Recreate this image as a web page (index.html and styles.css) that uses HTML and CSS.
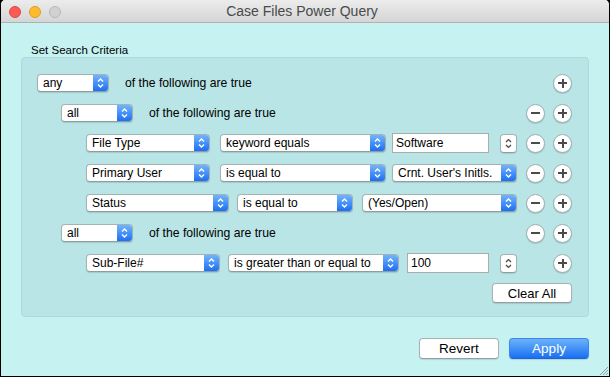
FILE: index.html
```html
<!DOCTYPE html>
<html lang="en">
<head>
    <meta charset="UTF-8">
    <title>Case Files Power Query</title>
    <link rel="stylesheet" href="styles.css">
</head>
<body>
    <div class="window">
        <div class="titlebar">
            <div class="lights">
                <span class="light close"></span>
                <span class="light minimize"></span>
                <span class="light zoom"></span>
            </div>
            <div class="title">Case Files Power Query</div>
        </div>

        <div class="content">
            <div class="section-label">Set Search Criteria</div>

            <div class="criteria">
                <!-- top level group -->
                <div class="row">
                    <div class="popup w-72"><span class="popup-text">any</span><span class="popup-arrow"></span></div>
                    <span class="row-text">of the following are true</span>
                    <div class="actions"><button class="circle plus"></button></div>
                </div>

                <div class="row level-1">
                    <div class="popup w-72"><span class="popup-text">all</span><span class="popup-arrow"></span></div>
                    <span class="row-text">of the following are true</span>
                    <div class="actions"><button class="circle minus"></button><button class="circle plus"></button></div>
                </div>

                <div class="row level-2">
                    <div class="popup w-124 gap-10"><span class="popup-text">File Type</span><span class="popup-arrow"></span></div>
                    <div class="popup w-166 gap-6"><span class="popup-text">keyword equals</span><span class="popup-arrow"></span></div>
                    <div class="field w-97">Software</div>
                    <div class="stepper"></div>
                    <div class="actions"><button class="circle minus"></button><button class="circle plus"></button></div>
                </div>

                <div class="row level-2">
                    <div class="popup w-124 gap-10"><span class="popup-text">Primary User</span><span class="popup-arrow"></span></div>
                    <div class="popup w-166 gap-6"><span class="popup-text">is equal to</span><span class="popup-arrow"></span></div>
                    <div class="popup w-125"><span class="popup-text">Crnt. User's Initls.</span><span class="popup-arrow"></span></div>
                    <div class="actions"><button class="circle minus"></button><button class="circle plus"></button></div>
                </div>

                <div class="row level-2">
                    <div class="popup w-143 gap-8"><span class="popup-text">Status</span><span class="popup-arrow"></span></div>
                    <div class="popup w-116 gap-9"><span class="popup-text">is equal to</span><span class="popup-arrow"></span></div>
                    <div class="popup w-155"><span class="popup-text">(Yes/Open)</span><span class="popup-arrow"></span></div>
                    <div class="actions"><button class="circle minus"></button><button class="circle plus"></button></div>
                </div>

                <div class="row level-1">
                    <div class="popup w-72"><span class="popup-text">all</span><span class="popup-arrow"></span></div>
                    <span class="row-text">of the following are true</span>
                    <div class="actions"><button class="circle minus"></button><button class="circle plus"></button></div>
                </div>

                <div class="row level-2">
                    <div class="popup w-134 gap-8"><span class="popup-text">Sub-File#</span><span class="popup-arrow"></span></div>
                    <div class="popup w-171 gap-8"><span class="popup-text">is greater than or equal to</span><span class="popup-arrow"></span></div>
                    <div class="field w-82">100</div>
                    <div class="stepper"></div>
                    <div class="actions"><button class="circle plus"></button></div>
                </div>

                <div class="clear-row">
                    <button class="push">Clear All</button>
                </div>
            </div>

            <div class="footer">
                <button class="push">Revert</button>
                <button class="push default">Apply</button>
            </div>
        </div>

        <svg class="grip" width="12" height="12" viewBox="0 0 12 12">
            <path d="M11 3 L3 11 M11 6 L6 11 M11 9 L9 11" stroke="#8a9c9c" stroke-width="1" fill="none"/>
        </svg>
    </div>
</body>
</html>
```

FILE: styles.css
```css
* {
    box-sizing: border-box;
}
body {
    margin: 0;
    background-color: #000;
    font-family: "Liberation Sans", Arial, sans-serif;
    font-size: 12px;
    color: #000;
}
.window {
    position: relative;
    width: 610px;
    height: 377px;
    background-color: #c6f2f2;
    border: 1px solid #000;
    border-top: none;
    border-radius: 5px 5px 0 0;
    overflow: hidden;
}
.titlebar {
    position: relative;
    height: 23px;
    background: linear-gradient(#ececec, #d5d5d5);
    border-bottom: 1px solid #b1b1b1;
    display: flex;
    align-items: center;
}
.lights {
    display: flex;
    gap: 8px;
    padding-left: 8px;
    padding-top: 1px;
}
.light {
    width: 12px;
    height: 12px;
    border-radius: 50%;
}
.close {
    background-color: #fc5c55;
    border: 1px solid #de4640;
}
.minimize {
    background-color: #fdbb2d;
    border: 1px solid #dd9f22;
}
.zoom {
    background-color: #d1d1d1;
    border: 1px solid #b9b9b9;
}
.title {
    flex: 1;
    text-align: center;
    color: #4a4a4a;
    margin-right: 66px;
    font-size: 14px;
}
.content {
    padding: 0 20px;
}
.section-label {
    padding-top: 21px;
    padding-left: 10px;
    height: 34px;
    font-size: 11.5px;
    line-height: 13px;
}
.criteria {
    background-color: #b9e5e6;
    border: 1px solid #acd9da;
    border-radius: 4px;
    padding: 10px 16px 13px 15px;
}
.row {
    display: flex;
    align-items: center;
    height: 30px;
}
.level-1 {
    padding-left: 24px;
}
.level-2 {
    padding-left: 49px;
}
.row-text {
    margin-left: 16px;
    font-size: 12.2px;
}
.popup {
    display: flex;
    height: 18px;
    background-color: #fff;
    border: 1px solid #a3b3b3;
    border-bottom-color: #8e9e9e;
    border-radius: 4px;
    box-shadow: 0 1px 1px rgba(0, 0, 0, 0.12);
    overflow: hidden;
}
.popup-text {
    flex: 1;
    padding-left: 5px;
    line-height: 17px;
    white-space: nowrap;
    overflow: hidden;
}
.popup-arrow {
    width: 15px;
    background-image:
        url("data:image/svg+xml,%3Csvg xmlns='http://www.w3.org/2000/svg' width='15' height='16' viewBox='0 0 15 16'%3E%3Cpath d='M5 6.5 L7.5 4 L10 6.5 M5 9.5 L7.5 12 L10 9.5' stroke='white' stroke-width='1.4' fill='none'/%3E%3C/svg%3E"),
        linear-gradient(#72b4fb, #1c6ff4);
}
.stepper {
    width: 17px;
    height: 19px;
    margin-left: 11px;
    background-color: #fff;
    border: 1px solid #a3b3b3;
    border-bottom-color: #8e9e9e;
    border-radius: 4px;
    box-shadow: 0 1px 1px rgba(0, 0, 0, 0.1);
    background-image: url("data:image/svg+xml,%3Csvg xmlns='http://www.w3.org/2000/svg' width='15' height='17' viewBox='0 0 15 17'%3E%3Cpath d='M5 7 L7.5 4.5 L10 7 M5 10 L7.5 12.5 L10 10' stroke='%23444' stroke-width='1.2' fill='none'/%3E%3C/svg%3E");
}
.field {
    height: 20px;
    background-color: #fff;
    border: 1px solid #a8aeae;
    padding-left: 3px;
    line-height: 19px;
}
.w-72 { width: 72px; }
.w-82 { width: 82px; }
.w-97 { width: 97px; }
.w-116 { width: 116px; }
.w-124 { width: 124px; }
.w-125 { width: 125px; }
.w-134 { width: 134px; }
.w-143 { width: 143px; }
.w-155 { width: 155px; }
.w-166 { width: 166px; }
.w-171 { width: 171px; }
.gap-6 { margin-right: 6px; }
.gap-8 { margin-right: 8px; }
.gap-9 { margin-right: 9px; }
.gap-10 { margin-right: 10px; }
.actions {
    margin-left: auto;
    display: flex;
    gap: 8px;
}
.circle {
    position: relative;
    width: 19px;
    height: 19px;
    padding: 0;
    border-radius: 50%;
    background-color: #fff;
    border: 1px solid #9fb0b0;
    box-shadow: 0 1px 1px rgba(0, 0, 0, 0.15);
}
.circle::before,
.plus::after {
    content: "";
    position: absolute;
    background-color: #4b4b4b;
}
.circle::before {
    left: 4px;
    top: 7.5px;
    width: 9px;
    height: 2px;
}
.plus::after {
    left: 7.5px;
    top: 4px;
    width: 2px;
    height: 9px;
}
.clear-row {
    display: flex;
    justify-content: flex-end;
    margin-top: 5px;
}
.push {
    width: 80px;
    height: 20px;
    padding: 0;
    font-family: "Liberation Sans", Arial, sans-serif;
    font-size: 13px;
    color: #000;
    background-color: #fff;
    border: 1px solid #a9b3b3;
    border-bottom-color: #959f9f;
    border-radius: 4px;
    box-shadow: 0 1px 1px rgba(0, 0, 0, 0.12);
}
.footer {
    display: flex;
    justify-content: flex-end;
    gap: 10px;
    margin-top: 21px;
}
.footer .push {
    height: 21px;
    font-size: 13.5px;
}
.default {
    color: #fff;
    background: linear-gradient(#6cb3fa, #1a6ff3);
    border-color: #3d86f0;
    border-bottom-color: #2063d8;
}
.grip {
    position: absolute;
    right: 0;
    bottom: 0;
}
```
